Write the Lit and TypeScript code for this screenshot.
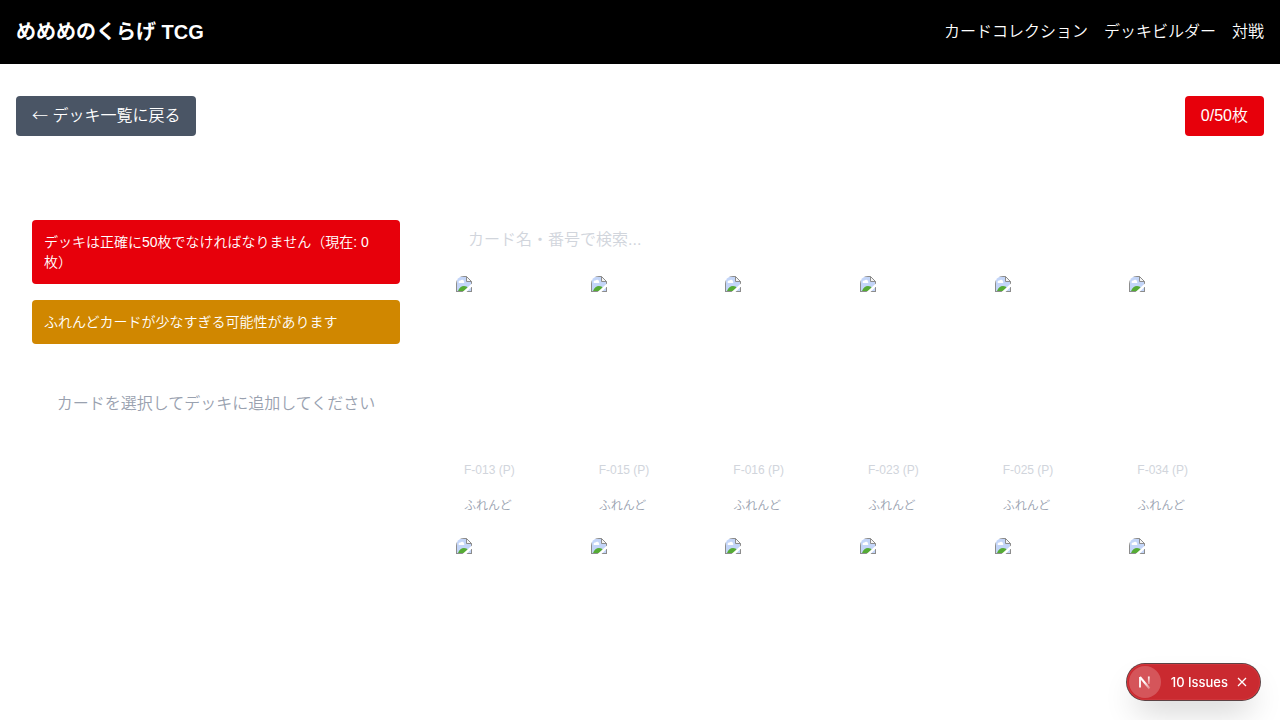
import { LitElement, html, css, svg, nothing } from "lit";
import { customElement, property } from "lit/decorators.js";

interface Card {
  code?: string;
  kind?: string;
}

const CARDS: Card[] = [
  ...["F-013", "F-015", "F-016", "F-023", "F-025", "F-034"].map((n) => ({
    code: `${n} (P)`,
    kind: "ふれんど",
  })),
  {}, {}, {}, {}, {}, {},
];

@customElement("deck-card")
class DeckCard extends LitElement {
  @property({ attribute: false }) card: Card = {};

  static styles = css`
    :host {
      display: block;
      border-radius: 8px;
      overflow: hidden;
      font-size: 12px;
      line-height: 16px;
    }
    .art {
      aspect-ratio: 3 / 4;
    }
    .art svg {
      display: block;
    }
    .info {
      padding: 28px 8px 8px;
    }
    .code {
      margin: 0 0 20px;
      color: #d1d5dc;
    }
    .kind {
      margin: 0;
      color: #99a1af;
    }
  `;

  render() {
    const { code, kind } = this.card;
    return html`
      <div class="art">
        <svg width="16" height="16" viewBox="0 0 16 16" aria-hidden="true">
          ${svg`
            <path d="M1 1H10.500L15 5.500V15H1Z" fill="#c3d5f8"/>
            <path d="M3 7a1.500 1.500 0 0 1 1.500-2.500a2 2 0 0 1 3.500 1a1 1 0 0 1 0 1.500H4Z" fill="#fff"/>
            <path d="M2 15Q4 10 8 10Q11 10 12 12L9 15Z" fill="#55ab35"/>
            <path d="M.5 16V.5H10.500L15.500 5.500V16M.5 15.500H15.500" fill="none" stroke="#8c8c8c"/>
            <path d="M10.500 .5V5.500H15.500Z" fill="#f4f4f4" stroke="#8c8c8c"/>
            <path d="M6.500 16L16 7.500V10.500L10.500 16Z" fill="#fff"/>
          `}
        </svg>
      </div>
      ${code
        ? html`<div class="info">
            <p class="code">${code}</p>
            <p class="kind">${kind}</p>
          </div>`
        : nothing}
    `;
  }
}

@customElement("issues-badge")
class IssuesBadge extends LitElement {
  static styles = css`
    :host {
      position: fixed;
      right: 20px;
      bottom: 20px;
      display: flex;
      align-items: center;
      box-sizing: border-box;
      height: 36px;
      padding: 2px 4px 2px 2px;
      border-radius: 18px;
      background: #ca2a30;
      color: #fff;
      font: 500 13px/16px Inter, "Liberation Sans", sans-serif;
      box-shadow:
        0 0 0 1px #d0353b inset,
        0 0 0 1px #5c4244,
        0 16px 32px -8px rgba(0, 0, 0, 0.24);
    }
    button {
      display: flex;
      align-items: center;
      justify-content: center;
      padding: 0;
      border: 0;
      background: none;
      color: inherit;
      font: inherit;
    }
    .logo {
      width: 32px;
      height: 32px;
      border-radius: 50%;
      background: #d5555a;
    }
    .open {
      margin-left: 10px;
    }
    .close {
      width: 28px;
      height: 28px;
    }
  `;

  render() {
    return html`
      <button class="logo" aria-label="Next.js">
        <svg width="16" height="16" viewBox="0 0 16 16" fill="none">
          <defs>
            <linearGradient id="a" x1="8" y1="8" x2="13" y2="15" gradientUnits="userSpaceOnUse">
              <stop stop-color="#fff" />
              <stop offset="1" stop-color="#fff" stop-opacity="0.2" />
            </linearGradient>
            <linearGradient id="b" x1="12" y1="2" x2="12" y2="11" gradientUnits="userSpaceOnUse">
              <stop stop-color="#fff" />
              <stop offset="1" stop-color="#fff" stop-opacity="0.2" />
            </linearGradient>
          </defs>
          <path d="M3 13.500V3" stroke="#fff" stroke-width="1.800" />
          <path d="M3 3L12.500 14.500" stroke="url(#a)" stroke-width="2" />
          <path d="M11.800 2.500V10" stroke="url(#b)" stroke-width="1.800" />
        </svg>
      </button>
      <button class="open">10 Issues</button>
      <button class="close" aria-label="Close">
        <svg width="10" height="10" viewBox="0 0 10 10" fill="none">
          <path d="M1 1L9 9M9 1L1 9" stroke="#fff" stroke-width="1.300" />
        </svg>
      </button>
    `;
  }
}

@customElement("app-root")
class AppRoot extends LitElement {
  static styles = css`
    :host {
      display: block;
      background: #fff;
      color: #fff;
      font: 16px/24px "Liberation Sans", "Noto Sans CJK JP", sans-serif;
    }
    .header {
      display: flex;
      align-items: center;
      justify-content: space-between;
      height: 64px;
      padding: 0 16px;
      background: #000;
    }
    a {
      color: inherit;
      text-decoration: none;
    }
    .brand {
      font-size: 20px;
      line-height: 28px;
      font-weight: 700;
    }
    .nav {
      display: flex;
      gap: 16px;
      font-weight: 350;
    }
    .main {
      padding: 32px 16px 0;
      font-weight: 350;
    }
    .toolbar {
      display: flex;
      justify-content: space-between;
      margin-bottom: 24px;
    }
    .back,
    .count {
      padding: 8px 16px;
      border: 0;
      border-radius: 4px;
      color: inherit;
      font: inherit;
    }
    .back {
      background: #4a5565;
    }
    .arrow {
      font-family: "Noto Sans CJK JP", sans-serif;
      font-weight: 300;
      line-height: 16px;
    }
    .count {
      background: #e7000b;
    }
    .columns {
      display: grid;
      grid-template-columns: repeat(3, minmax(0, 1fr));
      gap: 24px;
    }
    .panel {
      padding: 60px 16px 0;
    }
    .library {
      grid-column: span 2;
    }
    .notice {
      margin: 0 0 16px;
      padding: 12px;
      border-radius: 4px;
      font-size: 14px;
      line-height: 20px;
    }
    .error {
      background: #e7000b;
    }
    .warning {
      background: #d08700;
    }
    .empty {
      margin: 0;
      padding: 32px 0;
      text-align: center;
      color: #99a1af;
    }
    .search {
      display: block;
      box-sizing: border-box;
      width: 100%;
      height: 40px;
      margin-bottom: 16px;
      padding: 8px 12px;
      border: 0;
      outline: 0;
      background: none;
      color: #364153;
      font: inherit;
    }
    .search::placeholder {
      color: #d1d5dc;
    }
    .cards {
      display: grid;
      grid-template-columns: repeat(6, minmax(0, 1fr));
      gap: 16px;
    }
  `;

  render() {
    return html`
      <header class="header">
        <a class="brand" href="#">めめめのくらげ TCG</a>
        <nav class="nav">
          <a href="#cards">カードコレクション</a>
          <a href="#decks">デッキビルダー</a>
          <a href="#battle">対戦</a>
        </nav>
      </header>
      <main class="main">
        <div class="toolbar">
          <button class="back"><span class="arrow">←</span> デッキ一覧に戻る</button>
          <div class="count">0/50枚</div>
        </div>
        <div class="columns">
          <section class="panel">
            <p class="notice error">デッキは正確に50枚でなければなりません（現在: 0枚）</p>
            <p class="notice warning">ふれんどカードが少なすぎる可能性があります</p>
            <p class="empty">カードを選択してデッキに追加してください</p>
          </section>
          <section class="panel library">
            <input class="search" type="text" placeholder="カード名・番号で検索..." aria-label="カード名・番号で検索" />
            <div class="cards">
              ${CARDS.map((c) => html`<deck-card .card=${c}></deck-card>`)}
            </div>
          </section>
        </div>
      </main>
      <issues-badge></issues-badge>
    `;
  }
}
